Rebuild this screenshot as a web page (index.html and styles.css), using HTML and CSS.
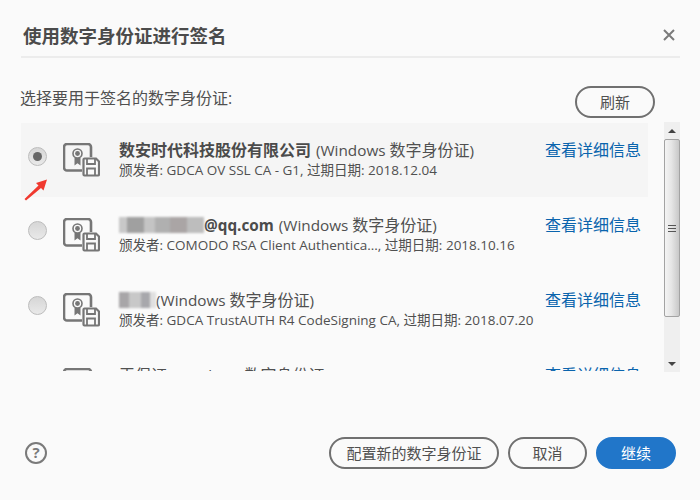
FILE: index.html
```html
<!DOCTYPE html>
<html lang="zh-CN">
<head>
<meta charset="utf-8">
<title>使用数字身份证进行签名</title>
<link rel="stylesheet" href="styles.css">
</head>
<body>
<svg class="defs" width="0" height="0" aria-hidden="true">
  <symbol id="cert" viewBox="0 0 37 34">
    <path d="M19 27.500H4a3 3 0 0 1-3-3V4a3 3 0 0 1 3-3h21a3 3 0 0 1 3 3v10" fill="none" stroke="#767676" stroke-width="2.600"/>
    <circle cx="14.500" cy="10.500" r="4.500" fill="none" stroke="#767676" stroke-width="1.600"/>
    <circle cx="14.500" cy="10.500" r="2.400" fill="#767676"/>
    <path d="M11.500 15v7.500l3-2.200 3 2.200V15z" fill="#767676"/>
    <path d="M21.500 15.500h11.500l3 3v13a1 1 0 0 1-1 1H21.500a1 1 0 0 1-1-1v-15a1 1 0 0 1 1-1z" fill="#fafafa" stroke="#767676" stroke-width="2.200"/>
    <path d="M24 16v5h8v-5M24 32v-6.500h8V32" fill="none" stroke="#767676" stroke-width="1.800"/>
  </symbol>
</svg>
<main class="dialog">
  <header class="head">
    <h1 class="title">使用数字身份证进行签名</h1>
    <svg class="close" width="14" height="14" viewBox="0 0 14 14"><path d="M2 2l10 10M12 2L2 12" stroke="#7a7a7a" stroke-width="2"/></svg>
  </header>
  <div class="toolbar">
    <p class="prompt">选择要用于签名的数字身份证:</p>
    <button class="btn refresh">刷新</button>
  </div>
  <div class="picker">
    <div class="list">
      <div class="row selected">
        <span class="radio on"></span>
        <svg class="cert" width="37" height="34"><use href="#cert"/></svg>
        <div class="info">
          <div class="name"><b>数安时代科技股份有限公司</b><span class="latin"> (Windows </span>数字身份证<span class="latin">)</span></div>
          <div class="issuer">颁发者: GDCA OV SSL CA - G1, 过期日期: 2018.12.04</div>
        </div>
        <a class="link">查看详细信息</a>
      </div>
      <div class="row">
        <span class="radio"></span>
        <svg class="cert" width="37" height="34"><use href="#cert"/></svg>
        <div class="info">
          <div class="name"><span class="mosaic wide"></span><b class="latin">@qq.com</b><span class="latin"> (Windows </span>数字身份证<span class="latin">)</span></div>
          <div class="issuer">颁发者: COMODO RSA Client Authentica..., 过期日期: 2018.10.16</div>
        </div>
        <a class="link">查看详细信息</a>
      </div>
      <div class="row">
        <span class="radio"></span>
        <svg class="cert" width="37" height="34"><use href="#cert"/></svg>
        <div class="info">
          <div class="name"><span class="mosaic narrow"></span><span class="latin">(Windows </span>数字身份证<span class="latin">)</span></div>
          <div class="issuer">颁发者: GDCA TrustAUTH R4 CodeSigning CA, 过期日期: 2018.07.20</div>
        </div>
        <a class="link">查看详细信息</a>
      </div>
      <div class="row">
        <span class="radio"></span>
        <svg class="cert" width="37" height="34"><use href="#cert"/></svg>
        <div class="info">
          <div class="name">王保证<span class="latin"> (Windows </span>数字身份证<span class="latin">)</span></div>
          <div class="issuer">颁发者: GDCA TrustAUTH R4 CA, 过期日期: 2018.07.20</div>
        </div>
        <a class="link">查看详细信息</a>
      </div>
    </div>
    <div class="scrollbar">
      <span class="arrow up"></span>
      <span class="thumb"><span class="grip"></span></span>
      <span class="track"></span>
      <span class="arrow down"></span>
    </div>
    <svg class="pointer" width="24" height="24" viewBox="0 0 24 24"><path d="M0.500 22L14.500 8.500 12 6l11-3.500-3.500 11-2.500-2.500L2 23.500z" fill="#f0392f"/></svg>
  </div>
  <footer class="foot">
    <svg class="help" width="24" height="24" viewBox="0 0 24 24"><circle cx="12" cy="12" r="10" fill="none" stroke="#7a7a7a" stroke-width="2"/><text x="12" y="17" text-anchor="middle" class="help-mark">?</text></svg>
    <div class="actions">
      <button class="btn config">配置新的数字身份证</button>
      <button class="btn cancel">取消</button>
      <button class="btn primary">继续</button>
    </div>
  </footer>
</main>
</body>
</html>
```

FILE: styles.css
```css
* { box-sizing: border-box; }
html, body { margin: 0; padding: 0; }
body {
  width: 700px;
  height: 500px;
  overflow: hidden;
  background: #fafafa;
  color: #505050;
  font-family: "Open Sans", "Noto Sans CJK SC", sans-serif;
}
.defs { position: absolute; }
.dialog {
  display: flex;
  flex-direction: column;
  height: 500px;
  padding: 0 20px 0 21px;
}
.head {
  display: flex;
  align-items: center;
  justify-content: space-between;
  height: 58px;
  padding: 20px 4px 4px 2px;
  border-bottom: 2px solid #ececec;
}
.close { margin-top: -2px; }
.title {
  margin: 0;
  font-size: 18.500px;
  font-weight: 700;
  line-height: 26px;
  color: #4b4b4b;
}
.toolbar {
  display: flex;
  align-items: center;
  justify-content: space-between;
  height: 32px;
  margin-top: 28px;
  padding-right: 25px;
}
.prompt {
  margin: 0 0 8px -1px;
  font-size: 16px;
  line-height: 24px;
}
.btn {
  height: 32px;
  padding: 0;
  border: 2px solid #707070;
  border-radius: 16px;
  background: transparent;
  color: #505050;
  font: 15px/28px "Open Sans", "Noto Sans CJK SC", sans-serif;
}
.refresh { width: 80px; }
.picker {
  position: relative;
  display: flex;
  justify-content: space-between;
  height: 250px;
  margin-top: 4px;
}
.list {
  width: 627px;
  height: 248px;
  margin-top: 1px;
  overflow: hidden;
}
.row {
  position: relative;
  display: flex;
  align-items: center;
  height: 75px;
  padding-left: 7px;
  flex: none;
}
.row.selected { height: 74px; background: #f5f5f5; }
.radio {
  flex: none;
  width: 19px;
  height: 19px;
  margin: -8px 16px 0 0;
  border: 1px solid #bcbcbc;
  border-radius: 50%;
  background: linear-gradient(#d6d6d6, #e9e9e9);
  display: flex;
  align-items: center;
  justify-content: center;
}
.radio.on::after {
  content: "";
  width: 9px;
  height: 9px;
  border-radius: 50%;
  background: #666;
}
.cert { flex: none; margin-right: 19px; }
.info { flex: none; width: 426px; }
.name {
  display: flex;
  align-items: baseline;
  white-space: pre;
  font-size: 16px;
  line-height: 20px;
}
.name b { font-weight: 700; color: #4b4b4b; margin-right: 1px; }
.name .latin { font-size: 15.300px; }
.issuer {
  font-size: 13.500px;
  line-height: 20px;
  white-space: nowrap;
}
.link {
  flex: none;
  margin-top: -20px;
  font-size: 16px;
  line-height: 24px;
  color: #0a64ad;
  white-space: nowrap;
}
.mosaic {
  align-self: center;
  height: 16px;
  filter: blur(1px);
}
.mosaic.wide {
  width: 85px;
  background: linear-gradient(90deg, #c8c8c8 0 10%, #a0a0a0 10% 30%, #c4c4c4 30% 42%, #b0b0b0 42% 60%, #aaa5a5 60% 80%, #bdbdbd 80% 100%);
}
.mosaic.narrow {
  width: 37px;
  background: linear-gradient(90deg, #a8a6a8 0 28%, #c8c8c8 28% 60%, #a8a8ac 60% 85%, #e0e0e0 85% 100%);
}
.scrollbar {
  display: flex;
  flex-direction: column;
  flex: none;
  width: 16px;
  height: 250px;
  background: #efefef;
}
.arrow {
  flex: none;
  height: 17px;
  display: flex;
  align-items: center;
  justify-content: center;
}
.arrow::after {
  content: "";
  border-left: 4px solid transparent;
  border-right: 4px solid transparent;
}
.arrow.up::after { border-bottom: 4px solid #444; }
.arrow.down::after { border-top: 4px solid #444; }
.thumb {
  flex: none;
  height: 178px;
  border: 1px solid #a3a3a3;
  border-radius: 2px;
  background: linear-gradient(90deg, #f4f4f4, #e6e6e6 45%, #c8c8c8);
  display: flex;
  align-items: center;
  justify-content: center;
}
.grip {
  width: 8px;
  height: 7px;
  background: repeating-linear-gradient(#555 0 1px, transparent 1px 3px);
}
.track { flex: 1; }
.pointer { position: absolute; left: 3px; top: 55px; }
.foot {
  display: flex;
  align-items: center;
  justify-content: space-between;
  height: 32px;
  margin-top: 65px;
  padding-right: 4px;
}
.help { margin-left: 3px; }
.help-mark {
  font-family: "Open Sans", sans-serif;
  font-size: 15px;
  font-weight: 700;
  fill: #7a7a7a;
}
.actions { display: flex; gap: 9px; }
.config { width: 170px; }
.cancel { width: 79px; }
.primary {
  width: 80px;
  border-color: #2176c9;
  background: #2176c9;
  color: #fff;
}
```
